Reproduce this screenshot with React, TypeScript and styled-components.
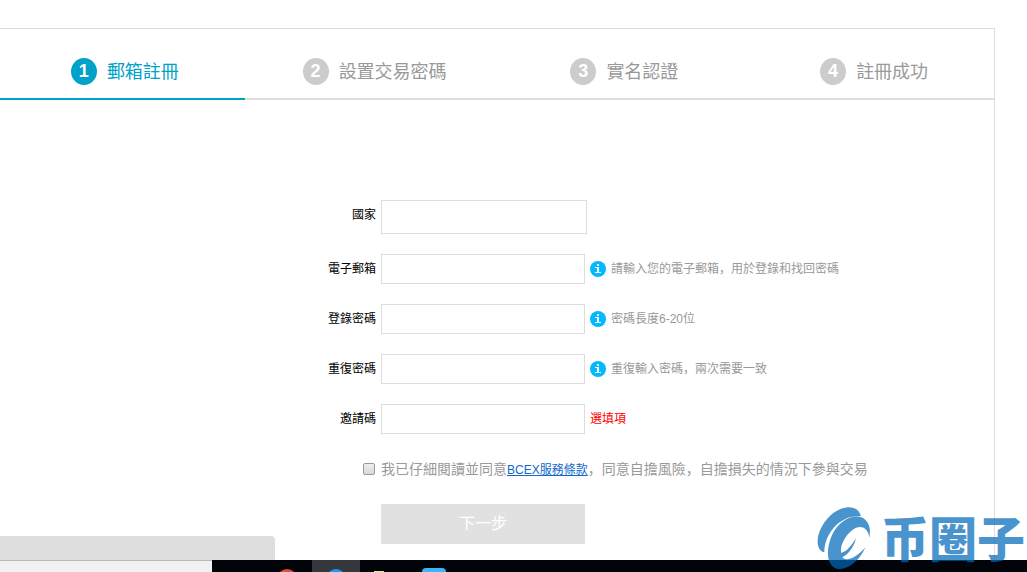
import React from "react";
import styled, { createGlobalStyle } from "styled-components";

const GlobalStyle = createGlobalStyle`
  * { box-sizing: border-box; }
  body {
    margin: 0;
    background: #fff;
    color: #000;
    font: 12px/18px "Liberation Sans", "Noto Sans CJK SC", sans-serif;
  }
`;

const Page = styled.div`
  position: relative;
  display: flex;
  flex-direction: column;
  min-height: 100vh;
  padding-top: 28px;
  overflow: hidden;
`;

const Panel = styled.main`
  flex: 1;
  margin-right: 32px;
  border: solid #ddd;
  border-width: 1px 1px 0 0;
`;

const Steps = styled.ol`
  display: flex;
  margin: 0 0 0 -5px;
  padding: 0;
  list-style: none;
`;

const Step = styled.li<{ $active?: boolean }>`
  flex: 1;
  display: flex;
  align-items: flex-start;
  justify-content: center;
  gap: 10px;
  padding: 29px 0 12px 10px;
  border-bottom: 2px solid ${(p) => (p.$active ? "#00a2ca" : "#ddd")};
  color: ${(p) => (p.$active ? "#00a2ca" : "#999")};
  font-size: 18px;
  line-height: 28px;
`;

const StepNumber = styled.span<{ $active?: boolean }>`
  width: 26px;
  height: 27px;
  border-radius: 50%;
  background: ${(p) => (p.$active ? "#00a2ca" : "#ccc")};
  color: #fff;
  font-weight: 700;
  line-height: 27px;
  text-align: center;
`;

const Form = styled.form`
  display: flex;
  flex-direction: column;
  gap: 20px;
  max-width: 742px;
  margin: 0 auto;
  padding: 100px 0 16px;
`;

const Row = styled.div`
  display: grid;
  grid-template-columns: 250px 1fr;
  column-gap: 5px;
  line-height: 30px;
`;

const Label = styled.label`
  text-align: right;
`;

const Field = styled.div`
  display: flex;
  align-items: center;
  gap: 5px;
  white-space: nowrap;
`;

const TextBox = styled.input<{ $large?: boolean }>`
  width: ${(p) => (p.$large ? 206 : 204)}px;
  height: ${(p) => (p.$large ? 34 : 30)}px;
  padding: 0 8px;
  border: 1px solid #ddd;
  background: #fff;
  font: inherit;
`;

const Hint = styled.span<{ $alert?: boolean }>`
  color: ${(p) => (p.$alert ? "#f00" : "#999")};
`;

const CheckCell = styled.div`
  display: flex;
  align-items: center;
  justify-content: flex-end;
`;

const CheckBox = styled.input`
  appearance: none;
  width: 12px;
  height: 12px;
  margin: 0 1px;
  border: 1px solid #999;
  border-radius: 2px;
  background: linear-gradient(#eee, #d8d8d8);
`;

const Agreement = styled.div`
  height: 30px;
  color: #999;
  font-size: 14px;
  white-space: nowrap;
`;

const TermsLink = styled.a`
  color: #0f67cb;
  font-size: 12px;
`;

const NextButton = styled.button`
  grid-column: 2;
  justify-self: start;
  width: 204px;
  height: 40px;
  padding: 0;
  border: 0;
  background: #e1e1e1;
  color: #fff;
  font: inherit;
  font-size: 16px;
`;

const TaskBar = styled.footer`
  position: relative;
  display: flex;
  height: 12px;
  background: #010409;
`;

const SearchBox = styled.div`
  width: 212px;
  border-top: 1px solid #b8b8b8;
  background: #f1f1f1;
`;

const TaskIcons = styled.svg`
  display: block;
  width: 240px;
  height: 12px;
`;

const StatusBubble = styled.div`
  position: absolute;
  left: 0;
  bottom: 12px;
  width: 275px;
  height: 24px;
  border-top-right-radius: 4px;
  background: #dedede;
`;

const Watermark = styled.div`
  position: absolute;
  right: 2px;
  bottom: 0;
  display: flex;
  gap: 5px;
  opacity: 0.71;
  color: #0169bb;
  font: 900 48px/68px "Noto Sans CJK SC", sans-serif;
`;

const InfoIcon = () => (
  <svg width="16" height="16" viewBox="0 0 16 16" aria-hidden="true">
    <circle cx="8" cy="8" r="8" fill="#00b9ff" />
    <path d="M7 3h2v2H7zM5 6h4v5h2v1H5v-1h2V7H5z" fill="#fff" />
  </svg>
);

const Swirl = () => (
  <svg width="64" height="70" viewBox="0 0 192 210" fill="currentColor" aria-hidden="true">
    <path d="M147 43C139 12 104 6 67 31C25 61 5 119 24 143C28 148 32 150 37 150C37 96 84 36 147 43Z" />
    <path d="M113 47C153 33 182 61 172 107C169 80 149 65 124 82C99 100 82 134 88 153C105 148 119 130 132 109C126 136 108 158 91 166C105 182 137 164 160 136C145 172 113 201 83 201C52 200 41 164 52 122C62 84 84 58 113 47Z" />
  </svg>
);

const steps = ["郵箱註冊", "設置交易密碼", "實名認證", "註冊成功"];

const fields = [
  { id: "country", label: "國家", type: "text", large: true },
  { id: "email", label: "電子郵箱", type: "email", hint: "請輸入您的電子郵箱，用於登錄和找回密碼" },
  { id: "password", label: "登錄密碼", type: "password", hint: "密碼長度6-20位" },
  { id: "repeat", label: "重復密碼", type: "password", hint: "重復輸入密碼，兩次需要一致" },
  { id: "invite", label: "邀請碼", type: "text", hint: "選填項", alert: true },
];

export default function App() {
  return (
    <Page>
      <GlobalStyle />
      <Panel>
        <Steps>
          {steps.map((name, i) => (
            <Step key={name} $active={i === 0}>
              <StepNumber $active={i === 0}>{i + 1}</StepNumber>
              {name}
            </Step>
          ))}
        </Steps>
        <Form onSubmit={(e) => e.preventDefault()}>
          {fields.map((f) => (
            <Row key={f.id}>
              <Label htmlFor={f.id}>{f.label}</Label>
              <Field>
                <TextBox id={f.id} type={f.type} $large={f.large} />
                {f.hint && !f.alert && <InfoIcon />}
                {f.hint && <Hint $alert={f.alert}>{f.hint}</Hint>}
              </Field>
            </Row>
          ))}
          <Row>
            <CheckCell>
              <CheckBox id="agree" type="checkbox" />
            </CheckCell>
            <Agreement>
              <label htmlFor="agree">我已仔細閱讀並同意</label>
              <TermsLink href="#terms">BCEX服務條款</TermsLink>
              ，同意自擔風險，自擔損失的情況下參與交易
            </Agreement>
          </Row>
          <Row>
            <NextButton type="submit">下一步</NextButton>
          </Row>
        </Form>
      </Panel>
      <TaskBar>
        <SearchBox />
        <TaskIcons viewBox="0 0 240 12" aria-hidden="true">
          <rect x="100" width="48" height="12" fill="#34373b" />
          <circle cx="75" cy="19" r="10" fill="#dd4f43" />
          <circle cx="124" cy="19" r="10" fill="#1e96fa" />
          <rect x="162" y="11" width="10" height="1" fill="#f3dc7a" />
          <rect x="210" y="8" width="24" height="12" rx="4" fill="#3eb3fb" />
        </TaskIcons>
      </TaskBar>
      <StatusBubble />
      <Watermark>
        <Swirl />
        <span>币圈子</span>
      </Watermark>
    </Page>
  );
}
